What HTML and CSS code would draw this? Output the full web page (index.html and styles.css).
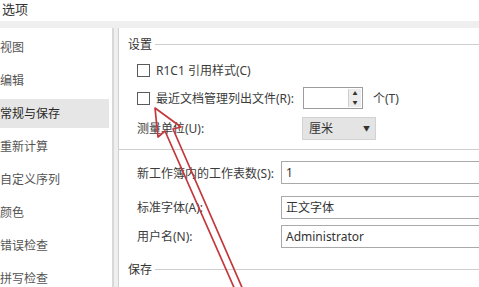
FILE: index.html
```html
<!DOCTYPE html>
<html lang="zh-CN">
<head>
    <meta charset="UTF-8">
    <title>选项</title>
    <link rel="stylesheet" href="styles.css">
</head>
<body>
    <div class="title">选项</div>

    <div class="main">
        <ul class="nav">
            <li>视图</li>
            <li>编辑</li>
            <li class="active">常规与保存</li>
            <li>重新计算</li>
            <li>自定义序列</li>
            <li>颜色</li>
            <li>错误检查</li>
            <li>拼写检查</li>
        </ul>

        <div class="panel">
            <div class="group-title first">设置</div>

            <div class="row r1">
                <span class="check"></span>
                <span>R1C1 引用样式(C)</span>
            </div>
            <div class="row r2">
                <span class="check"></span>
                <span class="label-recent">最近文档管理列出文件(R):</span>
                <span class="spin">
                    <span class="spin-btns">
                        <span class="up">&#9650;</span>
                        <span class="down">&#9660;</span>
                    </span>
                </span>
                <span class="unit">个(T)</span>
            </div>
            <div class="row r3">
                <span class="label-unit">测量单位(U):</span>
                <span class="select">厘米<span class="caret">&#9660;</span></span>
            </div>

            <div class="divider"></div>

            <div class="row field rs">
                <span class="label-field">新工作簿内的工作表数(S):</span>
                <span class="input">1</span>
            </div>
            <div class="row field ra">
                <span class="label-field">标准字体(A):</span>
                <span class="input">正文字体</span>
            </div>
            <div class="row field rn">
                <span class="label-field">用户名(N):</span>
                <span class="input">Administrator</span>
            </div>

            <div class="group-title save">保存</div>
        </div>
    </div>

    <svg class="arrow" width="479" height="287" viewBox="0 0 479 287">
        <polygon points="155,108 181,127 173,129 244,292 236,292 165,131 158,137"
                 fill="none" stroke="#c3383b" stroke-width="1.7" stroke-linejoin="round"/>
    </svg>
</body>
</html>
```

FILE: styles.css
```css
body {
    margin: 0;
    width: 479px;
    height: 287px;
    overflow: hidden;
    background: #fff;
    font-family: "Noto Sans", "Noto Sans CJK SC", sans-serif;
    font-size: 12px;
    color: #3c3c3c;
}
.title {
    height: 21px;
    line-height: 19px;
    padding-left: 2px;
    font-size: 13px;
    color: #333;
}
.main {
    display: flex;
    gap: 4px;
    background: #efefef;
    padding-top: 7px;
    height: 259px;
}
.nav {
    list-style: none;
    margin: 0;
    padding: 5px 0 0;
    width: 112px;
    flex-shrink: 0;
    background: #fff;
    border-right: 2px solid #d8d8d8;
}
.nav li {
    height: 29px;
    line-height: 29px;
    margin-bottom: 4px;
    margin-right: 3px;
    padding-left: 0;
    color: #555;
    white-space: nowrap;
}
.nav li.active {
    background: #e6e6e6;
    color: #2a2a2a;
}
.panel {
    flex: 1;
    background: #fff;
    border-left: 1px solid #d0d0d0;
    overflow: hidden;
}
.group-title {
    display: flex;
    align-items: center;
    gap: 3px;
    height: 16px;
    padding-left: 9px;
    color: #333;
}
.group-title::after {
    content: "";
    flex: 1;
    height: 1px;
    background: #cfcfcf;
}
.group-title.first {
    margin-top: 8px;
}
.group-title.save {
    margin-top: 14px;
}
.row {
    display: flex;
    align-items: center;
    height: 22px;
    padding-left: 18px;
    white-space: nowrap;
}
.row > span {
    flex-shrink: 0;
}
.r1 { margin-top: 7px; }
.r2 { margin-top: 6px; }
.r3 { margin-top: 8px; }
.check {
    width: 11px;
    height: 11px;
    border: 1px solid #5a5a5a;
    margin-right: 6px;
}
.label-recent {
    width: 147px;
}
.spin {
    display: flex;
    justify-content: flex-end;
    width: 58px;
    height: 20px;
    border: 1px solid #9c9c9c;
    background: #fff;
}
.spin-btns {
    display: flex;
    flex-direction: column;
    justify-content: space-between;
    width: 12px;
    margin: 1px;
    background: #ececec;
    border-left: 1px solid #cfcfcf;
    font-size: 5px;
    line-height: 9px;
    text-align: center;
    color: #333;
}
.unit {
    margin-left: 10px;
}
.label-unit {
    width: 165px;
}
.select {
    display: flex;
    align-items: center;
    justify-content: space-between;
    width: 61px;
    height: 21px;
    padding: 0 5px 0 6px;
    background: #e4e4e4;
    border: 1px solid #d2d2d2;
    color: #333;
}
.caret {
    font-size: 7px;
    color: #333;
}
.divider {
    height: 1px;
    background: #cfcfcf;
    margin-top: 10px;
}
.field .label-field {
    width: 144px;
}
.rs { margin-top: 11px; height: 23px; }
.ra { margin-top: 12px; }
.rn { margin-top: 7px; }
.input {
    width: 230px;
    height: 21px;
    line-height: 21px;
    padding-left: 4px;
    border: 1px solid #a9a9a9;
    background: #fff;
    color: #333;
}
.arrow {
    position: absolute;
    left: 0;
    top: 0;
    pointer-events: none;
}
```
